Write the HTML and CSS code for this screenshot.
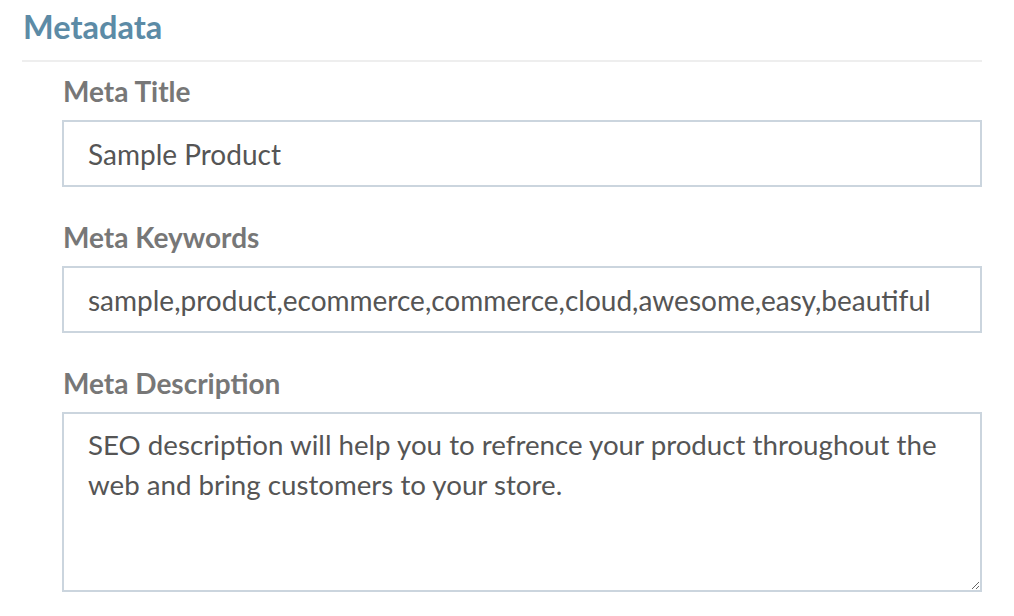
FILE: index.html
```html
<!DOCTYPE html>
<html>
<head>
<meta charset="utf-8">
<link rel="stylesheet" href="styles.css">
</head>
<body>
<section class="panel">
  <h2 class="panel-title">Metadata</h2>
  <div class="panel-body">
    <div class="field">
      <label class="field-label" for="mt">Meta Title</label>
      <input class="field-input" id="mt" type="text" value="Sample Product">
    </div>
    <div class="field">
      <label class="field-label" for="mk">Meta Keywords</label>
      <input class="field-input" id="mk" type="text" value="sample,product,ecommerce,commerce,cloud,awesome,easy,beautiful">
    </div>
    <div class="field">
      <label class="field-label" for="md">Meta Description</label>
      <textarea class="field-input field-textarea" id="md">SEO description will help you to refrence your product throughout the web and bring customers to your store.</textarea>
    </div>
  </div>
</section>
</body>
</html>
```

FILE: styles.css
```css
html, body {
  margin: 0;
  padding: 0;
  background: #ffffff;
}
body {
  font-family: Lato, "Noto Sans", sans-serif;
}
.panel {
  padding: 7px 32px 0 22px;
}
.panel-title {
  margin: 0;
  padding: 0 0 13px 1px;
  font-size: 32.5px;
  font-weight: 700;
  line-height: 40px;
  color: #5c8ba6;
  border-bottom: 2px solid #eeeeee;
}
.panel-body {
  padding-left: 40px;
  display: flex;
  flex-direction: column;
  gap: 33px;
  padding-top: 12px;
}
.field {
  display: flex;
  flex-direction: column;
}
.field-label {
  font-size: 28px;
  font-weight: 700;
  color: #777777;
  line-height: 34px;
  margin-bottom: 12px;
  padding-left: 1px;
}
.field-input {
  box-sizing: border-box;
  width: 100%;
  height: 67px;
  margin: 0;
  border: 2px solid #cbd5de;
  border-radius: 0;
  padding: 0 24px;
  font-family: Lato, "Noto Sans", sans-serif;
  font-size: 28px;
  color: #555555;
  background: #ffffff;
  outline: none;
}
.field-textarea {
  height: 180px;
  padding: 11px 24px;
  font-size: 27.7px;
  line-height: 39.5px;
  resize: vertical;
}
```
